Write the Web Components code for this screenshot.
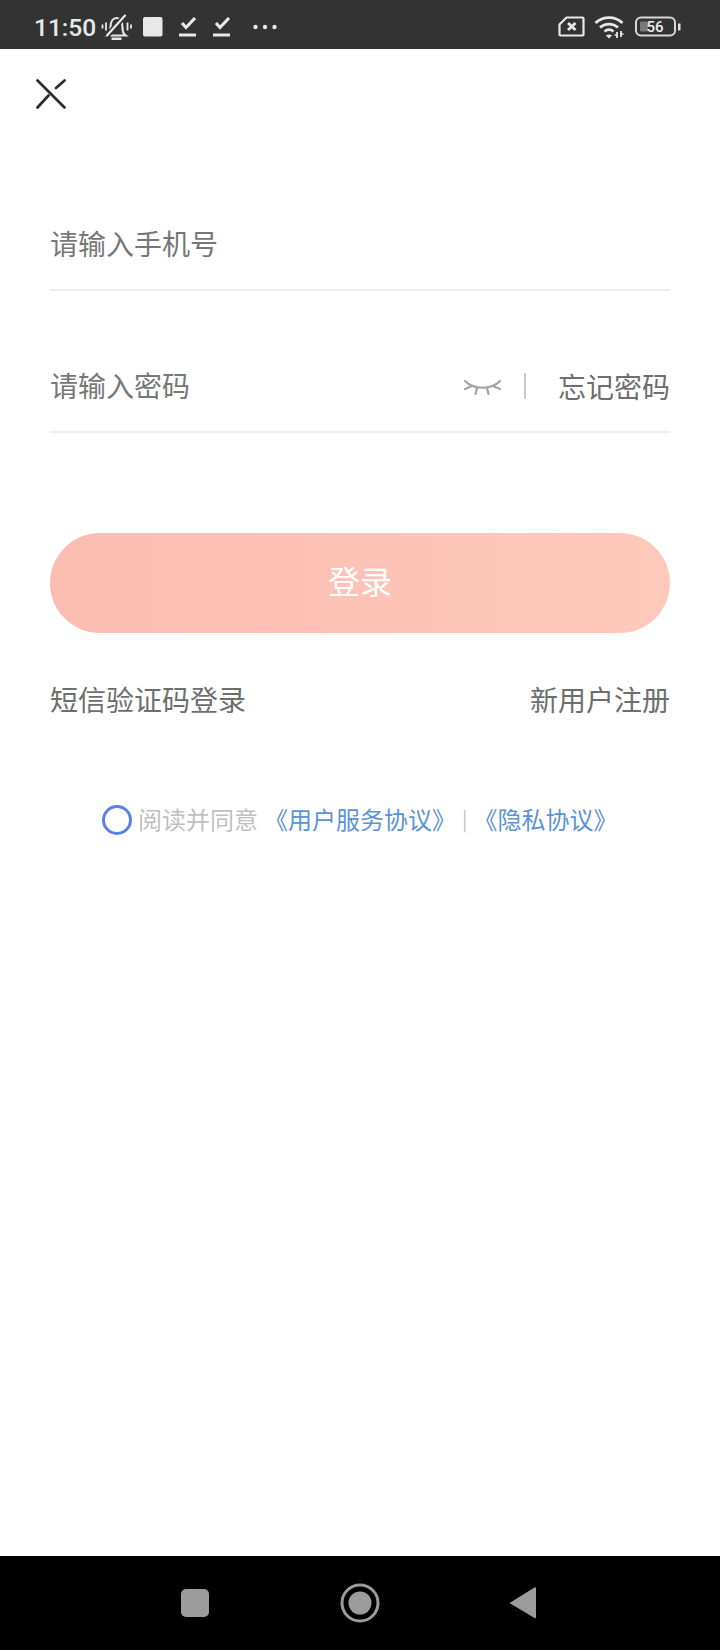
<!DOCTYPE html>
<html>
<head>
<meta charset="utf-8">
<style>
    html, body { margin: 0; padding: 0; background: #fff; }
    body { width: 720px; height: 1650px; font-family: "Noto Sans CJK SC", "Noto Sans", sans-serif; }
    login-page { height: 1650px; }
</style>
</head>
<body>
<login-page>
    <status-bar time="11:50" battery="56"></status-bar>
    <close-button></close-button>
    <login-field placeholder="请输入手机号" style="margin-top: 114px"></login-field>
    <login-field placeholder="请输入密码" style="margin-top: 74px">
        <password-tools></password-tools>
    </login-field>
    <login-button style="margin-top: 100px">登录</login-button>
    <link-row left="短信验证码登录" right="新用户注册"></link-row>
    <agree-row></agree-row>
    <nav-bar slot="bottom"></nav-bar>
</login-page>

<script>
class LoginPage extends HTMLElement {
    constructor() {
        super();
        this.attachShadow({ mode: "open" });
        this.shadowRoot.innerHTML = `
            <style>
                :host { display: flex; flex-direction: column; width: 720px; }
                .grow { flex: 1; }
            </style>
            <slot></slot>
            <div class="grow"></div>
            <slot name="bottom"></slot>
        `;
    }
}

class StatusBar extends HTMLElement {
    constructor() {
        super();
        this.attachShadow({ mode: "open" });
    }
    connectedCallback() {
        const time = this.getAttribute("time") || "";
        const battery = this.getAttribute("battery") || "";
        const check = `
            <svg width="18" height="21" viewBox="0 0 18 21" style="margin-left:16px" fill="none" stroke="#e8e8e8">
                <path d="M3 7l4 4.500 9-9.500" stroke-width="3.200"/>
                <path d="M0 19h17" stroke-width="3"/>
            </svg>`;
        this.shadowRoot.innerHTML = `
            <style>
                :host { display: flex; align-items: center; height: 49px; background: #333333; color: #e8e8e8; padding: 4px 39px 0 34px; box-sizing: border-box; font-family: Roboto, "Liberation Sans", sans-serif; }
                .time { font-size: 24.500px; font-weight: 500; line-height: 45px; width: 67px; margin-top: 2px; }
                svg { display: block; flex: none; }
                .left { display: flex; align-items: center; }
                .grow { flex: 1; }
                .battery { position: relative; width: 46px; height: 22px; margin-left: 11px; }
                .battery b { position: absolute; left: 5px; top: 0; width: 30px; text-align: center; font-size: 15px; line-height: 22px; font-weight: 500; color: #eee; }
            </style>
            <span class="time">${time}</span>
            <div class="left">
                <svg width="31" height="28" viewBox="0 0 31 28" fill="none" stroke="#e8e8e8" stroke-width="2.200">
                    <path d="M6.500 22.500c2-1.500 3-3.500 3-8 0-6 2.500-9.500 6-9.500s6 3.500 6 9.500c0 4.500 1 6.500 3 8z"/>
                    <path d="M11.500 25.800h8" stroke-width="2.400" stroke-linecap="round"/>
                    <path d="M5 24L25 1.500" stroke="#333" stroke-width="5.500"/>
                    <path d="M6 22.500L24 2.500" stroke-linecap="round"/>
                    <path d="M5 9.500v8M1.500 11.500v4M26.500 9.500v8M30 11.500v4" stroke-width="1.800"/>
                </svg>
                <svg width="20" height="20" viewBox="0 0 20 20" style="margin-left:11px"><rect width="19.500" height="19.500" rx="2" fill="#e8e8e8"/></svg>
                ${check}
                ${check}
                <svg width="24" height="6" viewBox="0 0 24 6" style="margin-left:22px" fill="#e8e8e8"><circle cx="2.500" cy="3" r="2.200"/><circle cx="12" cy="3" r="2.200"/><circle cx="21.500" cy="3" r="2.200"/></svg>
            </div>
            <div class="grow"></div>
            <svg width="27" height="21" viewBox="0 0 27 21" fill="none" stroke="#e8e8e8">
                <path d="M8.500 1.500H24.500a1 1 0 0 1 1 1V18.500a1 1 0 0 1-1 1H2.500a1 1 0 0 1-1-1V8.500z" stroke-width="2.200" stroke-linejoin="round"/>
                <path d="M10 7l7.500 7M17.500 7L10 14" stroke-width="2.800"/>
            </svg>
            <svg width="30" height="24" viewBox="0 0 30 24" style="margin-left:9px" fill="none" stroke="#e8e8e8" stroke-width="2.800">
                <path d="M1.500 8C9 .8 21 .8 28.500 8"/>
                <path d="M6 12.500c5-4.600 13-4.600 18 0"/>
                <path d="M10.500 16.500c2.700-2.200 6.300-2.200 9 0"/>
                <path d="M15 23.500l-3-3c1.800-1.200 4.200-1.200 6 0z" fill="#e8e8e8" stroke="none"/>
                <path d="M23 17v6M27 16v6" stroke-width="1.800"/>
                <path d="M20.500 20h3.500M26.500 19h3" stroke-width="1.500"/>
            </svg>
            <div class="battery">
                <svg width="46" height="22" viewBox="0 0 46 22" fill="none">
                    <rect x="1" y="1.500" width="39" height="18" rx="5" stroke="#d8d8d8" stroke-width="2"/>
                    <rect x="5" y="5.500" width="8" height="10" rx="1" fill="#7a7a7a"/>
                    <path d="M43 7.500h2.500v7H43z" fill="#e0e0e0"/>
                </svg>
                <b>${battery}</b>
            </div>
        `;
    }
}

class CloseButton extends HTMLElement {
    constructor() {
        super();
        this.attachShadow({ mode: "open" });
        this.shadowRoot.innerHTML = `
            <style>
                :host { display: block; padding: 30px 0 0 36px; height: 30px; }
                svg { display: block; }
            </style>
            <svg width="30" height="30" viewBox="0 0 30 30" fill="none" stroke="#2c2c2c" stroke-width="2.700" stroke-linecap="round">
                <path d="M1.500 1.500L28.500 28.500"/>
                <path d="M28.500 1.500L20 9M12.500 16.500L1.500 28.500"/>
            </svg>
        `;
    }
}

class LoginField extends HTMLElement {
    constructor() {
        super();
        this.attachShadow({ mode: "open" });
    }
    connectedCallback() {
        const placeholder = this.getAttribute("placeholder") || "";
        this.shadowRoot.innerHTML = `
            <style>
                :host { display: flex; align-items: center; margin: 0 50px; padding-bottom: 26px; border-bottom: 2px solid #eeeeee; font-family: "Noto Sans CJK SC", sans-serif; }
                .text { flex: 1; font-size: 28px; color: #777777; line-height: 40px; }
            </style>
            <span class="text">${placeholder}</span>
            <slot></slot>
        `;
    }
}

class PasswordTools extends HTMLElement {
    constructor() {
        super();
        this.attachShadow({ mode: "open" });
        this.shadowRoot.innerHTML = `
            <style>
                :host { display: flex; align-items: center; height: 40px; font-size: 28px; line-height: 40px; color: #6e6e6e; font-family: "Noto Sans CJK SC", sans-serif; margin-top: 1px; margin-bottom: -1px; }
                .sep { width: 2px; height: 26px; background: #c8c8c8; margin: 0 32px 0 23px; }
                svg { display: block; }
            </style>
            <svg width="37" height="18" viewBox="0 0 37 18" fill="none" stroke="#a3a3a3" stroke-width="2.200" stroke-linecap="round">
                <path d="M1 4C10 13 27 13 36 4"/>
                <path d="M1 12L8 9M13 11L11.500 17M23 11L24.500 17M29 9L36 12"/>
            </svg>
            <div class="sep"></div>
            <span>忘记密码</span>
        `;
    }
}

class LoginButton extends HTMLElement {
    constructor() {
        super();
        this.attachShadow({ mode: "open" });
        this.shadowRoot.innerHTML = `
            <style>
                :host { display: flex; align-items: center; justify-content: center; margin: 0 50px; height: 100px; padding-bottom: 7px; box-sizing: border-box; border-radius: 50px; background: linear-gradient(90deg, #fbbcb1, #fec9ba); color: #fff; font-size: 32px; font-family: "Noto Sans CJK SC", sans-serif; }
            </style>
            <slot></slot>
        `;
    }
}

class LinkRow extends HTMLElement {
    constructor() {
        super();
        this.attachShadow({ mode: "open" });
    }
    connectedCallback() {
        this.shadowRoot.innerHTML = `
            <style>
                :host { display: flex; justify-content: space-between; margin: 46px 50px 0; font-size: 28px; line-height: 40px; color: #6e6e6e; font-family: "Noto Sans CJK SC", sans-serif; }
            </style>
            <span>${this.getAttribute("left")}</span>
            <span>${this.getAttribute("right")}</span>
        `;
    }
}

class AgreeRow extends HTMLElement {
    constructor() {
        super();
        this.attachShadow({ mode: "open" });
        this.shadowRoot.innerHTML = `
            <style>
                :host { display: flex; align-items: center; margin: 79px 0 0 102px; height: 40px; font-size: 24px; color: #bfbfbf; font-family: "Noto Sans CJK SC", sans-serif; white-space: nowrap; }
                .ring { box-sizing: border-box; width: 30px; height: 30px; border: 3.500px solid #5b81e8; border-radius: 50%; margin: 3px 6px 0 0; flex: none; }
                a { color: #5b93d3; }
                .bar { margin: 0 6px 0 6px; font-size: 20px; }
                .first { margin-left: 6px; }
            </style>
            <div class="ring"></div>
            <span>阅读并同意</span>
            <a class="first">《用户服务协议》</a>
            <span class="bar">|</span>
            <a>《隐私协议》</a>
        `;
    }
}

class NavBar extends HTMLElement {
    constructor() {
        super();
        this.attachShadow({ mode: "open" });
        this.shadowRoot.innerHTML = `
            <style>
                :host { display: flex; align-items: center; height: 94px; background: #000; padding: 0 0 0 181px; box-sizing: border-box; }
                svg { display: block; flex: none; }
            </style>
            <svg width="28" height="28" viewBox="0 0 28 28"><rect width="28" height="28" rx="5" fill="#9c9c9c"/></svg>
            <svg width="40" height="40" viewBox="0 0 40 40" style="margin-left:131px" fill="#9c9c9c"><circle cx="20" cy="20" r="18" fill="none" stroke="#9c9c9c" stroke-width="3"/><circle cx="20" cy="20" r="11.500"/></svg>
            <svg width="28" height="34" viewBox="0 0 28 34" style="margin-left:129px" fill="#9c9c9c"><path d="M0.500 17L25.500 1.500a1 1 0 0 1 1.500 1V31a1 1 0 0 1-1.500 1z"/></svg>
        `;
    }
}

customElements.define("login-page", LoginPage);
customElements.define("status-bar", StatusBar);
customElements.define("close-button", CloseButton);
customElements.define("login-field", LoginField);
customElements.define("password-tools", PasswordTools);
customElements.define("login-button", LoginButton);
customElements.define("link-row", LinkRow);
customElements.define("agree-row", AgreeRow);
customElements.define("nav-bar", NavBar);
</script>
</body>
</html>
